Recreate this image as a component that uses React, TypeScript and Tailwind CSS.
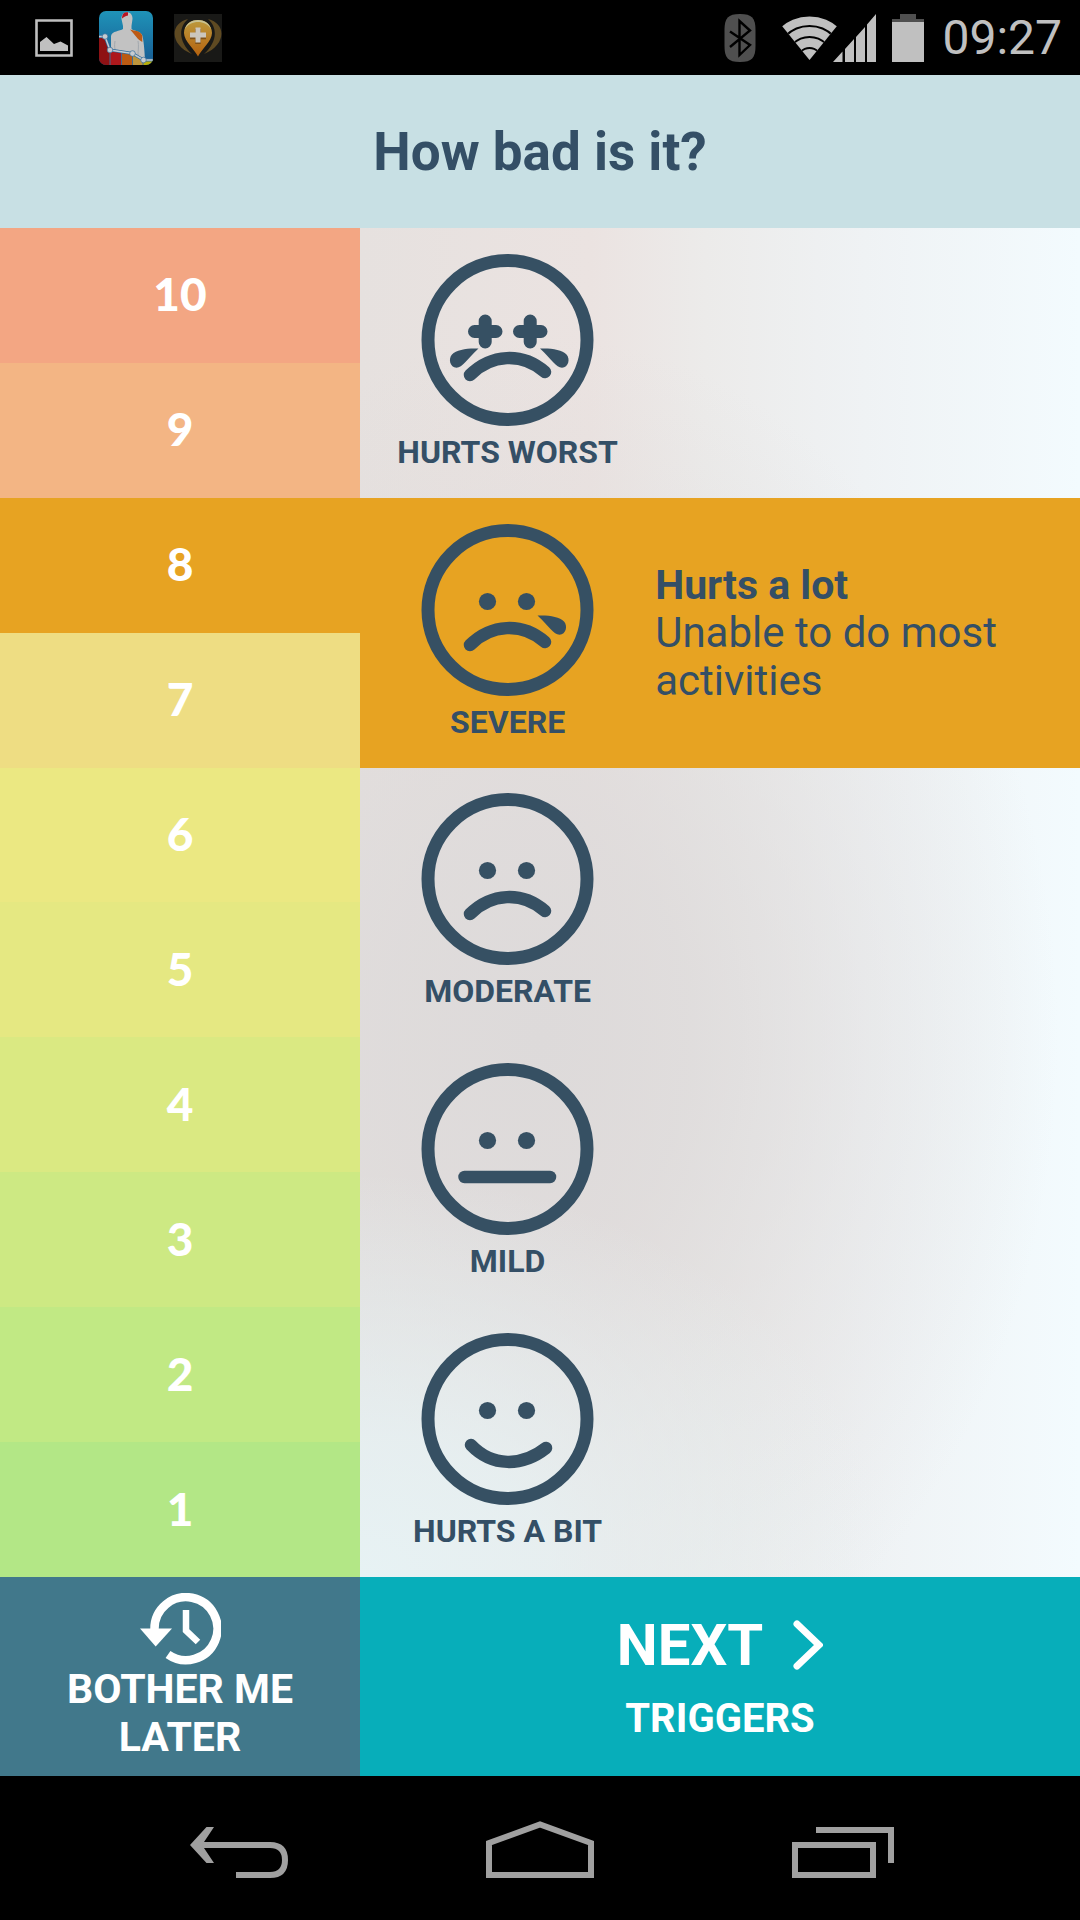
import { useState, type ReactNode } from 'react';

const LEVELS = [
  { value: 10, color: 'bg-[#f3a683]' },
  { value: 9, color: 'bg-[#f3b584]' },
  { value: 8, color: 'bg-[#e7a322]' },
  { value: 7, color: 'bg-[#eedd83]' },
  { value: 6, color: 'bg-[#ebe882]' },
  { value: 5, color: 'bg-[#e5e882]' },
  { value: 4, color: 'bg-[#dae982]' },
  { value: 3, color: 'bg-[#cde983]' },
  { value: 2, color: 'bg-[#c1e984]' },
  { value: 1, color: 'bg-[#b3e786]' },
];

const TEAR = 'M119 94.500C130 94 141 95.500 145.500 100.500C149.500 105 147.500 113.500 141 113.700C135 113.500 131 106 119 94.500Z';

function Eyes() {
  return (
    <g fill="currentColor" stroke="none">
      <circle cx="66.500" cy="77.500" r="8.600" />
      <circle cx="105.500" cy="77.500" r="8.600" />
    </g>
  );
}

const frown = <path d="M49 121C70 100 101 98 124 118" />;

function Face({ children }: { children: ReactNode }) {
  return (
    <svg
      viewBox="0 0 173 172"
      className="h-[172px] w-[173px] text-[#365063]"
      fill="none"
      stroke="currentColor"
      strokeWidth="12.500"
      strokeLinecap="round"
      aria-hidden="true"
    >
      <circle cx="86.500" cy="86" r="79.500" strokeWidth="13" />
      {children}
    </svg>
  );
}

const SEVERITIES = [
  {
    label: 'HURTS WORST',
    level: 10,
    title: '',
    text: '',
    face: (
      <>
        <path d="M53.500 77.500H75M64.200 67V88M98.500 77.500H120M109.200 67V88" strokeWidth="13" />
        <g fill="currentColor" stroke="none">
          <path d={TEAR} />
          <path d={TEAR} transform="matrix(-1 0 0 1 176.500 0)" />
        </g>
        {frown}
      </>
    ),
  },
  {
    label: 'SEVERE',
    level: 8,
    title: 'Hurts a lot',
    text: 'Unable to do most activities',
    face: (
      <>
        <Eyes />
        <path d={TEAR} transform="translate(-2.500 -3)" fill="currentColor" stroke="none" />
        {frown}
      </>
    ),
  },
  {
    label: 'MODERATE',
    level: 6,
    title: '',
    text: '',
    face: (
      <>
        <Eyes />
        {frown}
      </>
    ),
  },
  {
    label: 'MILD',
    level: 4,
    title: '',
    text: '',
    face: (
      <>
        <Eyes />
        <path d="M43.500 114H129" />
      </>
    ),
  },
  {
    label: 'HURTS A BIT',
    level: 2,
    title: '',
    text: '',
    face: (
      <>
        <Eyes />
        <path d="M50 112C71 134 101 134 125 115" />
      </>
    ),
  },
];

function StatusBar() {
  return (
    <div className="flex h-[75px] shrink-0 items-center justify-between bg-black pr-[18px] pl-[35px]">
      <div className="flex items-center">
        <svg viewBox="0 0 38 38" className="size-[38px]" aria-label="Picture saved">
          <path d="M1.500 1.500H36.500V36.500H1.500Z" fill="none" stroke="#c0c0c0" strokeWidth="2.600" />
          <path d="M5 32V23L11.500 18L19 25L25.500 22.500L33 26.500V32Z" fill="#c0c0c0" />
        </svg>
        <svg viewBox="0 0 54 54" className="ml-[26px] size-[54px]" aria-label="Pain tracker">
          <defs>
            <linearGradient id="sky" x1="0" y1="0" x2="0" y2="1">
              <stop offset="0" stopColor="#1f93b8" />
              <stop offset="1" stopColor="#175a92" />
            </linearGradient>
            <clipPath id="tile">
              <rect width="54" height="54" rx="7" />
            </clipPath>
          </defs>
          <g clipPath="url(#tile)">
            <rect width="54" height="54" fill="url(#sky)" />
            <path
              d="M22.500 8C22 -1 34 -1 33.500 8L32.500 15V18C35 20 42 20 43.500 25C45 32 46 44 46 54H12V25C13 20 21 20 24 18V15Z"
              fill="#c2c2c2"
            />
            <path d="M16 30C15 35 16 39 17 42M39 30C40 34 39 40 39 44" fill="none" stroke="#a2a8ae" strokeWidth="1" />
            <path d="M23 7.500C23 2 26 .8 29 1.200V4.500C26 5 25 6 23 7.500Z" fill="#b71523" />
            <path d="M31 18.500C36 20 42 19.500 43.300 25V31C38 28 37 25 31 18.500Z" fill="#bd5a14" />
            <path d="M0 26H6L11 39V54H0Z" fill="#8e1114" />
            <path d="M11 39L22 40.500V54H11Z" fill="#ad181c" />
            <path d="M22 40.500L33.500 42.500V54H22Z" fill="#bb5a12" />
            <path d="M33.500 42.500L44 48V54H33.500Z" fill="#bd943b" />
            <path d="M44 48.500H54V54H44Z" fill="#b9ae08" />
            <path d="M11 39V54M22.500 40V54M33.500 43V54M44 49V54" stroke="#406b91" strokeWidth="1" />
            <path d="M0 25.500H6L11 39L33.500 42.500L44.500 49H54" fill="none" stroke="#316b9b" strokeWidth="3" />
            <path d="M0 25.500H6L11 39L33.500 42.500L44.500 49H54" fill="none" stroke="#c3cbd1" strokeWidth="1.500" />
            <g fill="#c6cbd0" stroke="#3a6e9a" strokeWidth=".7">
              <circle cx="6" cy="25.500" r="2.800" />
              <circle cx="11" cy="39" r="2.800" />
              <circle cx="33.500" cy="42.500" r="2.800" />
              <circle cx="44.500" cy="49" r="2.800" />
            </g>
          </g>
        </svg>
        <svg viewBox="0 0 48 48" className="ml-[21px] size-12" aria-label="Health locator">
          <defs>
            <linearGradient id="pin" x1="0" y1="0" x2="0" y2="1">
              <stop offset="0" stopColor="#bc9a3d" />
              <stop offset="1" stopColor="#b5610e" />
            </linearGradient>
          </defs>
          <rect width="48" height="48" fill="#191917" />
          <path d="M14 5C-5 10 -4 31 18 40C6 29 3 15 14 5ZM34 5C53 10 52 31 30 40C42 29 45 15 34 5Z" fill="#5f4a22" />
          <path d="M24 42.500C21 36 10 27 10 19C10 1.500 38 1.500 38 19C38 27 27 36 24 42.500Z" fill="url(#pin)" />
          <path d="M11 15C14 3 34 3 37 15C32 5.500 16 5.500 11 15Z" fill="#c8c192" />
          <path d="M24 15V30M16 22.500H32" stroke="#805219" strokeWidth="5.500" />
          <path d="M24 13.500V28.500M16 21H32" stroke="#cbc6bd" strokeWidth="5" />
        </svg>
      </div>
      <div className="flex items-center">
        <svg viewBox="0 0 32 48" className="h-12 w-8" aria-label="Bluetooth">
          <path d="M16 0C28 0 31.500 4 31.500 16V32C31.500 44 28 48 16 48S.5 44 .5 32V16C.5 4 4 0 16 0Z" fill="#4f4f4f" />
          <path d="M6 17.500L26 31L15.500 41V7L26 16.500L6 33" fill="none" stroke="#000" strokeWidth="2.400" />
        </svg>
        <svg viewBox="0 0 96 48" className="ml-[25px] h-12 w-24" aria-label="Wi-Fi and mobile signal">
          <defs>
            <clipPath id="fan">
              <path d="M28.500 46L-1 9.500V0H58V9.500Z" />
            </clipPath>
          </defs>
          <g clipPath="url(#fan)">
            <circle cx="28.500" cy="46" r="43.500" fill="#c0c0c0" />
            <g fill="none" stroke="#000" strokeWidth="2">
              <circle cx="28.500" cy="46" r="34" />
              <circle cx="28.500" cy="46" r="23" />
              <circle cx="28.500" cy="46" r="12" />
            </g>
          </g>
          <path d="M52 48L61.500 37.500V48ZM64 35L73 25V48H64ZM75 23L84 13V48H75ZM86 10.500L95 0V48H86Z" fill="#c0c0c0" />
        </svg>
        <svg viewBox="0 0 32 48" className="ml-[15px] h-12 w-8" aria-label="Battery">
          <path d="M8 0H24V5H32V8H0V5H8Z" fill="#4f4f4f" />
          <path d="M0 8H32V48H0Z" fill="#c0c0c0" />
        </svg>
        <time className="ml-[18px] font-[Roboto,sans-serif] text-[48px] leading-[56px] text-[#c0c0c0]">09:27</time>
      </div>
    </div>
  );
}

function NavBar() {
  const icon = 'h-[58px] w-[108px]';
  return (
    <nav className="flex h-36 shrink-0 items-center justify-center bg-black pt-1 text-[#a0a0a0]">
      <button type="button" aria-label="Back" className="flex w-[28%] justify-center">
        <svg viewBox="0 0 108 58" className={icon} fill="none" stroke="currentColor" strokeWidth="6">
          <path d="M14 24H86C97 24 101 30 101 39S97 54 86 54H52" />
          <path d="M22.500 6H30L18 24L30 42H22.500L6 24Z" fill="currentColor" stroke="none" />
        </svg>
      </button>
      <button type="button" aria-label="Home" className="flex w-[28%] justify-center">
        <svg viewBox="0 0 108 58" className={icon} fill="none" stroke="currentColor" strokeWidth="6">
          <path d="M3 22L54 3.500L105 22V54H3Z" />
        </svg>
      </button>
      <button type="button" aria-label="Recent apps" className="flex w-[28%] justify-center">
        <svg viewBox="0 0 108 58" className={icon} fill="none" stroke="currentColor" strokeWidth="6">
          <path d="M7 24H85V54H7ZM28 9H103V42" />
        </svg>
      </button>
    </nav>
  );
}

export default function App() {
  const [level, setLevel] = useState(8);
  const group = Math.ceil(level / 2);

  return (
    <div className="flex min-h-screen flex-col bg-black font-[Roboto,'Noto_Sans',sans-serif] text-[#344f66]">
      <StatusBar />
      <header className="flex h-[153px] shrink-0 items-center justify-center bg-[#c8e0e4]">
        <h1 className="text-[53px] leading-[64px] font-bold">How bad is it?</h1>
      </header>

      <main className="grid grow grid-cols-3">
        <div className="grid grid-rows-10">
          {LEVELS.map(({ value, color }) => (
            <button
              key={value}
              type="button"
              aria-pressed={value === level}
              onClick={() => setLevel(value)}
              className={`${color} pb-[2px] font-[Lato,sans-serif] text-[46px] leading-[56px] font-black text-white`}
            >
              {value}
            </button>
          ))}
        </div>
        <div className="col-span-2 grid grid-rows-5 bg-[radial-gradient(75%_30%_at_0%_100%,#e7f2f4_0%,#e7f2f4cc_35%,#e7f2f400_100%),radial-gradient(72%_52%_at_25%_60%,#dddada_0%,#dddadacc_30%,#dddada66_62%,#dddada00_100%),linear-gradient(to_right,#e6e1df_0%,#ebe3e1_32%,#ecebea_48%,#eff2f4_70%,#f3fbfe_100%)]">
          {SEVERITIES.map((s) => {
            const selected = Math.ceil(s.level / 2) === group;
            return (
              <button
                key={s.label}
                type="button"
                aria-pressed={selected}
                onClick={() => setLevel(s.level)}
                className={`flex items-center ${selected ? 'bg-[#e7a322]' : ''}`}
              >
                <span className="flex w-[41%] flex-col items-center gap-2 pb-[2px]">
                  <Face>{s.face}</Face>
                  <span className="text-[32px] leading-9 font-bold whitespace-nowrap">{s.label}</span>
                </span>
                {s.title && (
                  <span className="flex flex-1 flex-col pr-16 text-left text-[42px] leading-[48px]">
                    <strong className="text-[41px] font-bold">{s.title}</strong>
                    <span>{s.text}</span>
                  </span>
                )}
              </button>
            );
          })}
        </div>
      </main>

      <footer className="grid h-[199px] shrink-0 grid-cols-3 text-white">
        <button type="button" className="flex flex-col items-center justify-center bg-[#41788b] text-[41px] leading-[48px] font-bold">
          <svg viewBox="0 0 81 72" className="h-[72px] w-[81px]" fill="none" stroke="currentColor" aria-hidden="true">
            <path d="M14.500 38V36A31.500 31.500 0 1 1 28 61.500" strokeWidth="8.500" />
            <path d="M0 35.500H32L15.700 53.500Z" fill="currentColor" stroke="none" />
            <path d="M46 17V37.500L58 49" strokeWidth="6.500" />
          </svg>
          <span className="px-12">BOTHER ME LATER</span>
        </button>
        <button type="button" className="col-span-2 flex flex-col items-center justify-center gap-[14px] bg-[#07aeba] pb-[2px] font-bold">
          <span className="flex items-center gap-[30px] text-[58px] leading-[72px]">
            NEXT
            <svg viewBox="0 0 30 50" className="h-[50px] w-[30px]" fill="none" stroke="currentColor" strokeWidth="7" strokeLinecap="round" aria-hidden="true">
              <path d="M4 4L26 25L4 46" />
            </svg>
          </span>
          <span className="text-[40px] leading-[48px]">TRIGGERS</span>
        </button>
      </footer>
      <NavBar />
    </div>
  );
}
